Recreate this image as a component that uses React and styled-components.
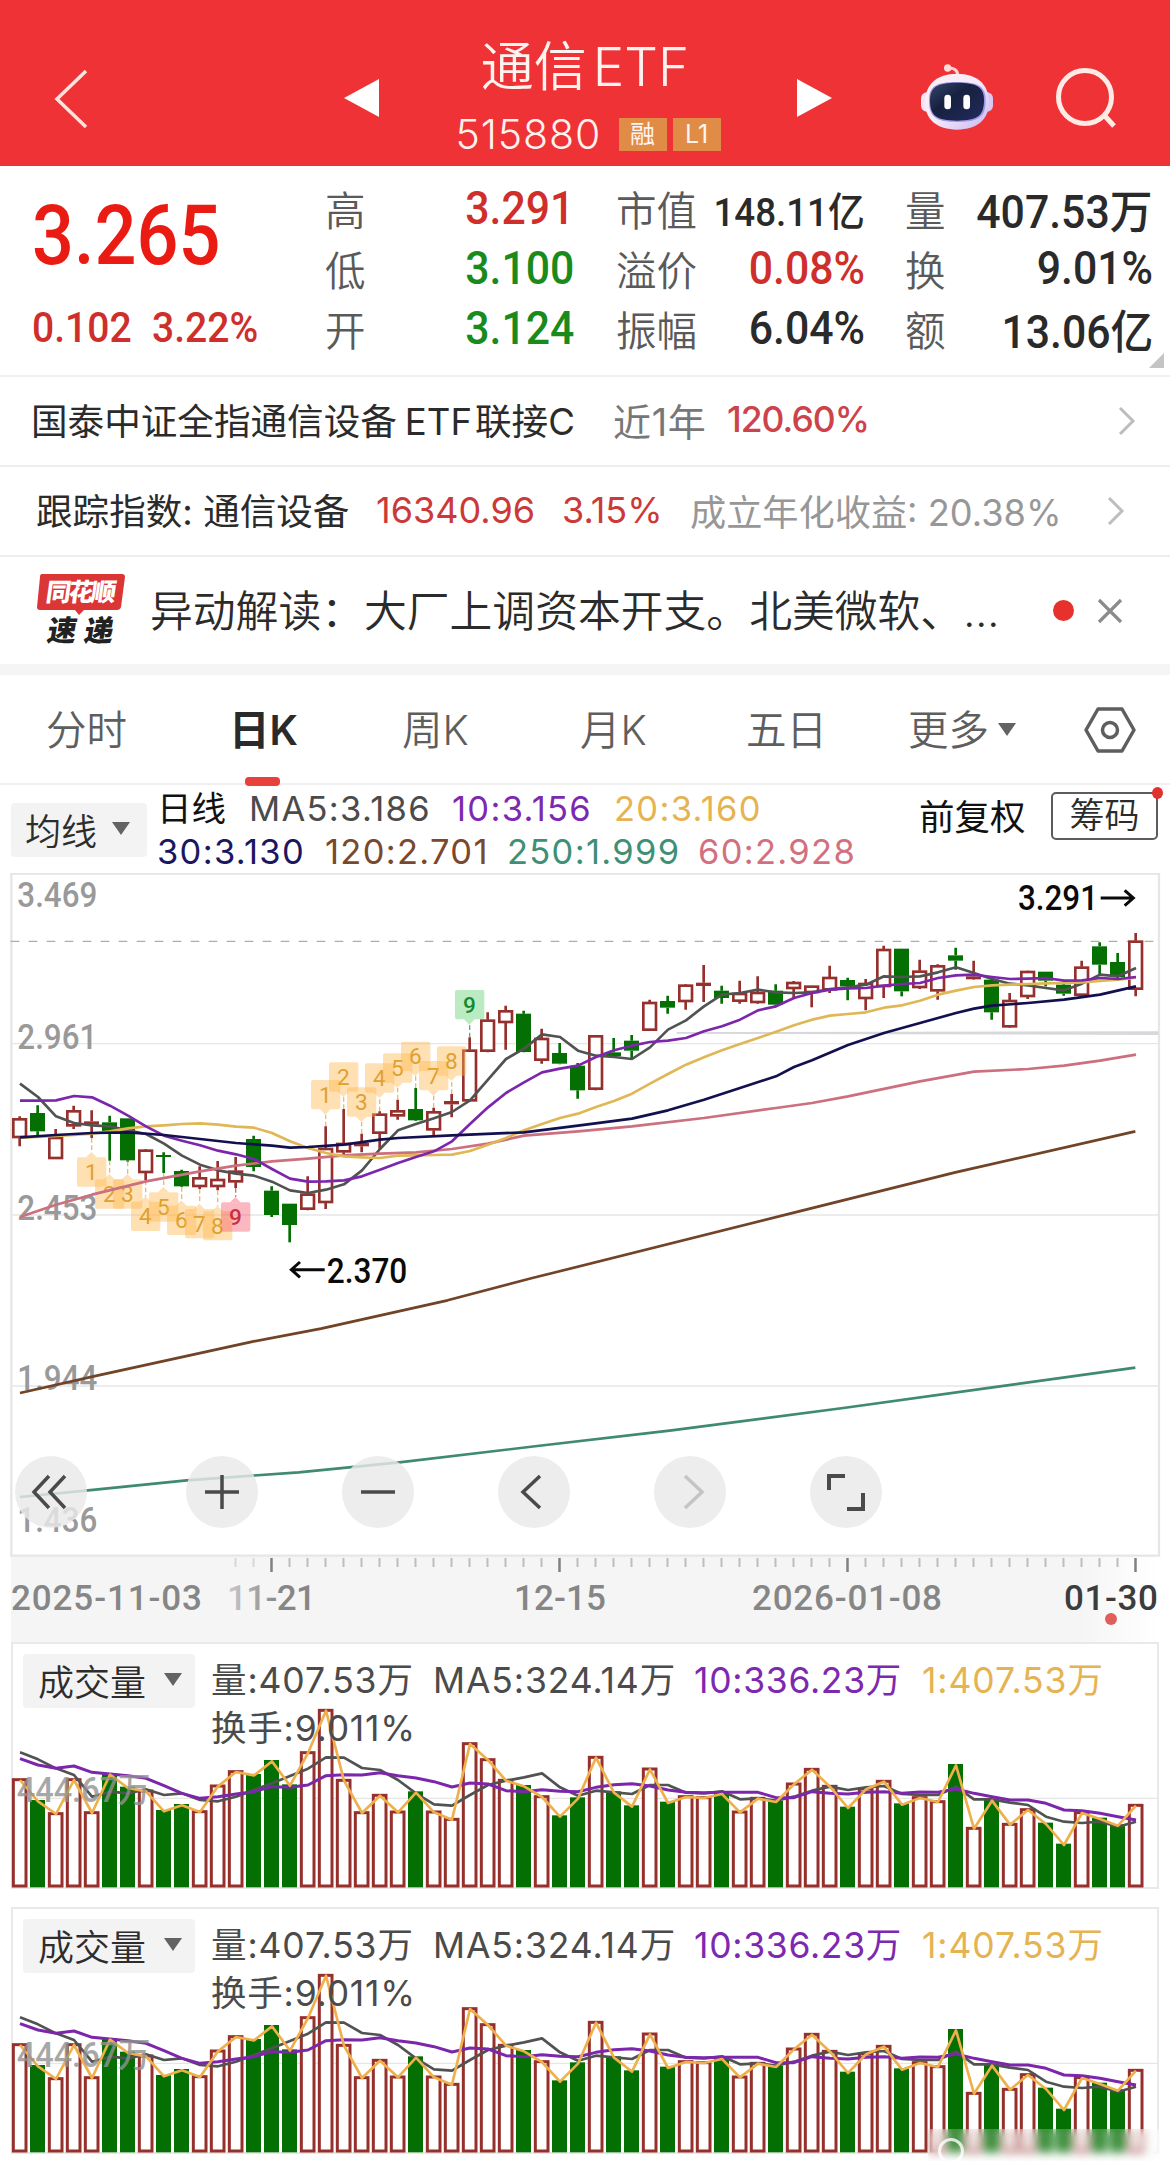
import React from 'react';
import styled, { createGlobalStyle } from 'styled-components';

const GlobalStyle = createGlobalStyle`
  * {
    box-sizing: border-box;
  }

  body {
    margin: 0;
    background: #fff;
    font-family: Inter, "Noto Sans CJK SC", sans-serif;
    color: #2b2b2b;
  }
`;

const DIN = 'Roboto, "Noto Sans CJK SC", sans-serif';

const Page = styled.div`
  width: 1170px;
  height: 2173px;
  overflow: hidden;
  background: #fff;
`;

/* ---------- header ---------- */

const Header = styled.header`
  display: grid;
  grid-template-columns: 344px 35px 418px 35px 88px 76px 1fr;
  height: 166px;
  background: #ee3236;
  color: #fff3f0;

  svg {
    display: block;
  }
`;

const HeaderCell = styled.div`
  padding-top: ${(p) => p.$top}px;
  padding-left: ${(p) => p.$left || 0}px;
`;

const TitleBlock = styled.div`
  padding-top: 37px;
  display: flex;
  flex-direction: column;
  align-items: center;
`;

const Title = styled.h1`
  margin: 0;
  font-size: 53px;
  line-height: 60px;
  font-weight: 350;
  white-space: nowrap;
  padding-right: 6px;

  span {
    margin-left: 6px;
  }
`;

const SubTitle = styled.div`
  display: flex;
  align-items: center;
  gap: 6px;
  height: 34px;
  margin-top: 20px;
`;

const Code = styled.span`
  width: 157px;
  font-size: 41px;
  line-height: 34px;
  font-weight: 350;
  letter-spacing: 0.9px;
`;

const Tag = styled.span`
  width: 48px;
  height: 33px;
  background: #e08c46;
  font-size: 25px;
  line-height: 33px;
  text-align: center;
`;

/* ---------- quote ---------- */

const Quote = styled.section`
  display: grid;
  grid-template-columns: 325px 249px 42px 249px 40px 248px;
  height: 211px;
  border-bottom: 2px solid #efefef;
  position: relative;
`;

const PriceBox = styled.div`
  padding: 30px 0 0 32px;
  color: #ea1b12;
  font-family: ${DIN};
`;

const Price = styled.div`
  font-size: 84px;
  line-height: 80px;
  font-weight: 500;
  transform: scaleX(0.88);
  transform-origin: left;
`;

const Change = styled.div`
  display: flex;
  margin-top: 30px;
  font-size: 42px;
  line-height: 44px;
  font-weight: 500;
  color: #cf2f2b;
  transform: scaleX(0.93);
  transform-origin: left;

  span {
    width: 129px;
  }
`;

const StatColumn = styled.div`
  padding-top: 12px;
`;

const Stat = styled.div`
  display: flex;
  justify-content: space-between;
  align-items: center;
  height: 60px;
  font-size: 40.5px;
  font-weight: 350;
  color: #5a5a5a;
  white-space: nowrap;
`;

const StatValue = styled.span`
  font-family: ${DIN};
  font-size: ${(p) => p.$size || 46}px;
  font-weight: 500;
  color: ${(p) => p.$color || '#2a2a2a'};
  transform: scaleX(0.93);
  transform-origin: right;
`;

const Corner = styled.i`
  position: absolute;
  right: 6px;
  bottom: 7px;
  border-left: 15px solid transparent;
  border-bottom: 15px solid #c4c4c4;
`;

/* ---------- link rows ---------- */

const Row = styled.div`
  display: flex;
  align-items: center;
  height: 90px;
  padding-left: ${(p) => p.$pad}px;
  border-bottom: 2px solid #eeeeee;
  white-space: nowrap;
`;

const RowText = styled.span`
  flex: none;
  width: ${(p) => p.$w}px;
  padding-bottom: 3px;
  font-size: ${(p) => p.$size || 36}px;
  font-weight: ${(p) => p.$weight || 400};
  letter-spacing: ${(p) => p.$ls || 0}px;
  color: ${(p) => p.$color || '#2b2b2b'};
`;

const Latin = styled.span`
  margin: 0 3px 0 8px;
`;

const News = styled(Row)`
  height: 107px;
  border-bottom: 0;
`;

const NewsLogo = styled.div`
  width: 88px;
  height: 76px;
  margin-right: 25px;
`;

const NewsText = styled.div`
  width: 903px;
  padding-bottom: 5px;
  font-size: 42.8px;
  font-weight: 350;
`;

const Dot = styled.i`
  width: 21px;
  height: 21px;
  border-radius: 50%;
  background: #e8302c;
  margin-right: 23px;
`;

const Band = styled.div`
  height: 11px;
  background: #f5f5f5;
`;

/* ---------- tabs ---------- */

const Tabs = styled.nav`
  display: grid;
  grid-template-columns: 185px 171px 178px 165px 173px 196px 1fr;
  height: 110px;
  border-bottom: 2px solid #efefef;
`;

const Tab = styled.div`
  position: relative;
  padding-left: ${(p) => p.$pad}px;
  font-size: 40.5px;
  line-height: 112px;
  font-weight: ${(p) => (p.$active ? 600 : 350)};
  color: ${(p) => (p.$active ? '#2a2a2a' : '#5e5e5e')};
  white-space: nowrap;

  &::after {
    content: '';
    display: ${(p) => (p.$active ? 'block' : 'none')};
    position: absolute;
    left: 60px;
    bottom: 1px;
    width: 35px;
    height: 9px;
    border-radius: 4px;
    background: #e8403a;
  }
`;

const Caret = styled.i`
  display: inline-block;
  border-left: 9.5px solid transparent;
  border-right: 9.5px solid transparent;
  border-top: 13px solid #636363;
  margin-left: ${(p) => p.$gap}px;
  vertical-align: ${(p) => p.$lift || 0}px;
`;

const SettingCell = styled.div`
  padding: 32px 0 0 16px;
`;

/* ---------- indicator legend ---------- */

const Indicator = styled.section`
  display: flex;
  height: 88px;
  padding-left: 11px;
`;

const Pill = styled.div`
  display: flex;
  align-items: center;
  width: ${(p) => p.$w}px;
  height: 54px;
  padding: 0 0 3px ${(p) => p.$pad || 15}px;
  border-radius: 4px;
  background: #f3f3f3;
  font-size: 36px;
  font-weight: 350;
  color: #2d2d2d;
  white-space: nowrap;
`;

const IndicatorPill = styled(Pill)`
  margin: 18px 10px 0 0;
`;

const Lines = styled.div`
  width: 762px;
  padding-top: 2px;
`;

const LegendLine = styled.div`
  display: flex;
  height: 43px;
  line-height: 43px;
  font-size: 34.5px;
  white-space: nowrap;
`;

const Legend = styled.span`
  flex: none;
  width: ${(p) => p.$w}px;
  color: ${(p) => p.$color || '#4b4b4b'};
  letter-spacing: ${(p) => p.$ls ?? 1.3}px;
`;

const Adjust = styled.div`
  width: 132px;
  line-height: 65px;
  font-size: 35.5px;
  color: #111;
`;

const Chips = styled.div`
  position: relative;
  width: 107px;
  height: 48px;
  margin-top: 7px;
  border: 2px solid #5c5c5c;
  border-radius: 5px;
  font-size: 35px;
  line-height: 43px;
  text-align: center;
  font-weight: 350;

  &::after {
    content: '';
    position: absolute;
    right: -7px;
    top: -7px;
    width: 11px;
    height: 12px;
    border-radius: 50%;
    background: #e0322e;
  }
`;

/* ---------- charts ---------- */

const ChartPanel = styled.section`
  position: relative;
  height: 684px;

  svg {
    display: block;
  }
`;

const Toolbar = styled.div`
  position: absolute;
  left: 15px;
  top: 583px;
  display: flex;
  gap: 84px;
`;

const ToolButton = styled.button`
  width: 72px;
  height: 72px;
  padding: 0;
  border: 0;
  border-radius: 50%;
  background: rgba(233, 233, 233, 0.82);
  color: ${(p) => (p.$muted ? '#c4c4c4' : '#4a4a4a')};

  &:first-child {
    margin-right: 15px;
  }
`;

const Axis = styled.div`
  height: 85px;
  margin: 0 11px;
  background: linear-gradient(90deg, #f5f5f5 0 93%, #fff 100%);

  svg {
    display: block;
    margin-left: -11px;
  }
`;

const VolumePanel = styled.section`
  display: grid;
  height: 247px;
  margin: 0 11px ${(p) => p.$gap}px;
  border: 2px solid #e9e9e9;

  > * {
    grid-area: 1 / 1;
  }
`;

const VolumeHead = styled.div`
  display: flex;
  padding: 10px 0 0 10px;
`;

const VolumeLegend = styled.div`
  margin: 3px 0 0 16px;
  font-size: 35.5px;
  line-height: 48px;
  white-space: nowrap;

  > div {
    display: flex;
  }
`;

const VolumeSvg = styled.svg`
  display: block;
  width: 1170px;
  height: 247px;
  margin: -2px 0 0 -13px;
`;

const Watermark = styled.div`
  position: absolute;
  left: 928px;
  top: 2129px;
  width: 232px;
  height: 32px;
  backdrop-filter: blur(5px);
  background: rgba(255, 255, 255, 0.2);

  &::before {
    content: '';
    position: absolute;
    left: 10px;
    top: 9px;
    width: 20px;
    height: 20px;
    border: 3px solid rgba(255, 255, 255, 0.8);
    border-radius: 50%;
  }
`;

const GREEN = '#047004';
const RED = '#96302d';

// one unit is a third of a pixel; each bar is 54 units apart
const barX = (i) => 58 + 54 * i;

// [up, body top, body bottom, high, low]
const candles = [
  [1, 776, 835, 770, 860], [0, 760, 815, 737, 828], [1, 832, 898, 808, 898], [1, 752, 800, 738, 808],
  [1, 785, 795, 752, 835], [0, 788, 815, 768, 903], [0, 776, 902, 776, 906], [1, 870, 940, 868, 962],
  [0, 886, 892, 878, 940], [0, 934, 980, 930, 982], [1, 953, 982, 920, 988], [1, 958, 982, 904, 992],
  [1, 933, 968, 892, 985], [0, 838, 922, 828, 935], [0, 993, 1066, 980, 1072], [0, 1032, 1096, 1032, 1148],
  [1, 1002, 1050, 950, 1052], [1, 865, 1030, 800, 1048], [1, 850, 878, 748, 885], [1, 850, 860, 822, 878],
  [1, 762, 822, 755, 868], [1, 752, 770, 720, 780], [0, 748, 782, 685, 784], [1, 755, 812, 744, 828],
  [1, 724, 734, 703, 773], [1, 570, 725, 533, 725], [1, 480, 576, 458, 578], [1, 452, 490, 438, 570],
  [0, 462, 577, 453, 578], [1, 535, 603, 507, 612], [0, 580, 612, 550, 614], [0, 618, 692, 610, 717],
  [1, 527, 690, 527, 692], [0, 578, 590, 535, 592], [0, 543, 573, 526, 600], [1, 427, 513, 420, 514],
  [0, 424, 444, 408, 462], [1, 375, 427, 373, 450], [1, 369, 379, 316, 427], [0, 393, 415, 378, 432],
  [1, 400, 426, 363, 432], [1, 397, 430, 350, 432], [0, 393, 435, 374, 440], [1, 367, 388, 364, 415],
  [1, 378, 400, 378, 443], [1, 352, 392, 318, 400], [0, 361, 380, 354, 422], [1, 370, 418, 358, 452],
  [1, 268, 382, 258, 415], [0, 267, 395, 267, 410], [1, 333, 385, 300, 388], [1, 317, 395, 314, 420],
  [0, 287, 303, 264, 330], [1, 350, 359, 303, 360], [0, 360, 458, 358, 480], [1, 421, 503, 400, 504],
  [1, 334, 412, 333, 418], [0, 336, 363, 336, 380], [0, 375, 402, 370, 408], [1, 321, 408, 303, 412],
  [0, 260, 315, 248, 345], [0, 307, 352, 280, 355], [1, 243, 390, 220, 410],
];

const ma5 = [
  672, 712, 770, 790, 797, 800, 812, 823, 852, 888, 915, 932, 942, 948, 966, 992, 1000, 990, 974, 932, 868,
  812, 793, 776, 757, 722, 660, 598, 567, 524, 532, 573, 588, 592, 598, 563, 510, 482, 440, 405, 400, 390,
  398, 400, 398, 388, 383, 375, 350, 352, 350, 338, 323, 340, 358, 372, 377, 385, 392, 372, 345, 350, 325,
];

const ma10 = [
  723, 723, 722, 709, 713, 738, 768, 800, 828, 843, 857, 873, 884, 898, 928, 957, 966, 965, 962, 950, 930,
  910, 892, 875, 845, 793, 743, 700, 668, 638, 627, 618, 592, 572, 558, 547, 543, 535, 515, 500, 480, 452,
  440, 415, 400, 390, 386, 385, 378, 373, 370, 355, 347, 345, 352, 358, 357, 355, 363, 362, 355, 358, 352,
];

const ma20 = [
  834, 832, 829, 826, 822, 815, 806, 800, 797, 793, 791, 795, 801, 804, 820, 845, 865, 880, 890, 893, 895,
  888, 887, 886, 885, 874, 855, 835, 812, 793, 775, 762, 742, 724, 702, 672, 643, 615, 593, 572, 553, 535,
  516, 497, 480, 468, 463, 458, 444, 437, 423, 405, 393, 382, 377, 375, 373, 371, 370, 368, 364, 360, 354,
];

// sparse averages: [bar index, y]
const ma30 = [
  [0, 833], [2, 826], [4, 820], [6, 818], [8, 826], [10, 838], [12, 850], [14, 858], [15, 864], [16, 862],
  [18, 855], [20, 840], [21, 835], [24, 827], [28, 818], [31, 798], [34, 777], [36, 752], [38, 720],
  [40, 685], [42, 650], [43, 622], [44, 602], [46, 556], [48, 520], [50, 490], [52, 460], [53, 447],
  [54, 438], [56, 430], [58, 420], [60, 405], [62, 380],
];

const ma60 = [
  [0, 1072], [2, 1035], [4, 1005], [7, 965], [10, 935], [12, 918], [14, 905], [16, 897], [18, 887], [20, 882],
  [22, 878], [24, 868], [26, 852], [28, 828], [31, 815], [34, 800], [38, 775], [42, 745], [44, 730],
  [46, 710], [50, 665], [53, 636], [56, 628], [58, 618], [60, 603], [62, 585],
];

const ma120 = '60,1600 291,1548 761,1445 963,1407 1343,1322 1594,1256 2370,1062 2866,938 3406,815';
const ma250 = '60,1912 264,1892 560,1862 896,1838 1198,1808 1612,1759 2015,1712 2530,1645 2978,1583 3406,1524';

// td sequence marks: [bar index, number, y]
const marks = [
  [4, 1, 937], [5, 2, 1003], [6, 3, 1003], [7, 4, 1070], [8, 5, 1042], [9, 6, 1082], [10, 7, 1092],
  [11, 8, 1098], [12, 9, 1072], [17, 1, 705], [18, 2, 652], [19, 3, 727], [20, 4, 655], [21, 5, 625],
  [22, 6, 590], [23, 7, 648], [24, 8, 604], [25, 9, 435],
];

const grid = [
  { y: 40, label: '3.469', base: 143 },
  { y: 552, label: '2.961', base: 567 },
  { y: 1066, label: '2.453', base: 1080 },
  { y: 1579, label: '1.944', base: 1592 },
  { y: 2088, label: '1.436', base: 2017 },
];

const volumes = [
  446, 510, 548, 446, 545, 430, 470, 480, 540, 522, 542, 465, 422, 432, 390, 463, 365, 238, 448, 545, 493,
  543, 484, 543, 565, 338, 386, 448, 465, 497, 556, 502, 379, 484, 526, 414, 515, 497, 500, 488, 543, 502,
  512, 459, 415, 466, 530, 474, 451, 520, 500, 512, 402, 592, 508, 580, 536, 578, 641, 545, 563, 583, 523,
];

const volMa5 = [
  367, 388, 415, 435, 500, 485, 490, 478, 495, 490, 510, 514, 500, 480, 460, 438, 416, 382, 383, 414, 420,
  450, 490, 523, 527, 495, 465, 452, 442, 430, 472, 497, 482, 487, 492, 465, 465, 488, 490, 484, 508, 505,
  512, 500, 482, 470, 480, 472, 468, 492, 495, 495, 470, 508, 508, 518, 525, 560, 575, 579, 575, 590, 575,
];

const volMa10 = [
  386, 405, 415, 408, 427, 432, 437, 445, 467, 490, 505, 500, 492, 485, 470, 472, 465, 437, 434, 435, 428,
  437, 444, 455, 471, 459, 462, 482, 485, 479, 484, 485, 472, 464, 461, 468, 480, 487, 488, 487, 487, 487,
  503, 503, 485, 490, 492, 487, 485, 490, 486, 487, 477, 490, 500, 510, 510, 520, 540, 542, 550, 560, 570,
];

const toPoints = (values) => values.map((y, i) => `${barX(i) + 2},${y}`).join(' ');
const toSparse = (values) => values.map(([i, y]) => `${barX(i) + 2},${y}`).join(' ');

const Line = ({ points, color, width = 8 }) => (
  <polyline points={points} fill="none" stroke={color} strokeWidth={width} strokeLinejoin="round" />
);

const markColor = (i, n) => {
  if (n < 9) return { bg: '#ffb44a', fg: '#e0a030' };
  return i === 12 ? { bg: '#f8566a', fg: '#c8323c' } : { bg: '#5ccf70', fg: '#178a2c' };
};

const Candles = () =>
  candles.map(([up, top, bottom, high, low], i) => {
    const x = barX(i);
    const color = up ? RED : GREEN;
    const solid = !up || bottom - top < 14;
    return (
      <g key={i} stroke={color} strokeWidth="8">
        <path d={`M${x + 1} ${high}V${top}M${x + 1} ${bottom}V${low}`} />
        {solid ? (
          <rect x={x - 22} y={top} width="45" height={bottom - top} fill={color} stroke="none" />
        ) : (
          <rect x={x - 18} y={top + 3} width="38" height={Math.max(bottom - top - 6, 4)} fill="#fff" />
        )}
      </g>
    );
  });

const Marks = () =>
  marks.map(([i, n, y]) => {
    const { bg, fg } = markColor(i, n);
    const above = i > 12;
    const x = barX(i);
    const edge = above ? candles[i][3] : candles[i][4];
    const tip = above ? y + 60 : y - 60;
    const side = above ? y + 44 : y - 44;
    return (
      <g key={i}>
        <path d={`M${x + 1} ${edge}V${tip}`} stroke={fg} strokeWidth="4" strokeDasharray="14 8" opacity="0.7" />
        <rect x={x - 43} y={y - 44} width="88" height="88" rx="6" fill={bg} opacity="0.42" />
        <path d={`M${x - 16} ${side}L${x} ${tip}L${x + 16} ${side}Z`} fill={bg} opacity="0.42" />
        <text
          x={x}
          y={y + 24}
          fontFamily="Roboto"
          fontSize="68"
          fontWeight={n === 9 ? 500 : 400}
          fill={fg}
          textAnchor="middle"
        >
          {n}
        </text>
      </g>
    );
  });

const PriceChart = () => (
  <svg width="1170" height="684" viewBox="0 40 3510 2052">
    <rect x="34" y="42" width="3443" height="2046" fill="none" stroke="#e6e6e6" strokeWidth="7" />
    {grid.slice(1, 4).map((g) => (
      <path key={g.y} d={`M34 ${g.y}H3475`} stroke="#e6e6e6" strokeWidth="4" />
    ))}
    <path d="M2030 517L3475 515V526L2030 522Z" fill="#d8d8dc" />
    <path d="M32 245H3475" stroke="#b3ae8c" strokeWidth="4" strokeDasharray="26 28" />
    {grid.map((g) => (
      <text
        key={g.label}
        x="52"
        y={g.base}
        fontFamily="Roboto"
        fontSize="105"
        fontWeight="500"
        fill="#999"
        textLength="240"
        lengthAdjust="spacingAndGlyphs"
      >
        {g.label}
      </text>
    ))}
    <Candles />
    <Marks />
    <Line points={toPoints(ma5)} color="#505352" />
    <Line points={toSparse(ma60)} color="#cc6f7e" />
    <Line points={toPoints(ma20)} color="#e0b755" />
    <Line points={toPoints(ma10)} color="#7c26ac" />
    <Line points={toSparse(ma30)} color="#12104f" />
    <Line points={ma120} color="#714327" />
    <Line points={ma250} color="#3f8a70" />
    <g fill="#0a0a0a" fontFamily="Roboto" fontWeight="500" fontSize="106">
      <text x="3054" y="152" textLength="240" lengthAdjust="spacingAndGlyphs">3.291</text>
      <text x="980" y="1270" textLength="242" lengthAdjust="spacingAndGlyphs">2.370</text>
    </g>
    <g fill="none" stroke="#0a0a0a" strokeWidth="9">
      <path d="M3302 115H3398M3374 92L3400 115L3374 138" />
      <path d="M974 1230H876M900 1207L874 1230L900 1253" />
    </g>
  </svg>
);

const dates = [
  { x: 11, w: 191, text: '2025-11-03', color: '#868686' },
  { x: 227, w: 89, text: '11-21', color: 'url(#fade)' },
  { x: 514, w: 92, text: '12-15', color: '#868686' },
  { x: 752, w: 190, text: '2026-01-08', color: '#868686' },
  { x: 1064, w: 94, text: '01-30', color: '#3c3c3c' },
];

const TimeAxis = () => (
  <Axis>
    <svg width="1170" height="85">
      <defs>
        <linearGradient id="fade">
          <stop offset="0" stopColor="#cacaca" />
          <stop offset="0.6" stopColor="#868686" />
        </linearGradient>
      </defs>
      {Array.from({ length: 51 }, (_, k) => k + 12).map((i) => {
        const major = (i - 14) % 16 === 0;
        return (
          <path
            key={i}
            d={`M${20 + 18 * i - 0.5} 1v${major ? 14 : 9}`}
            stroke={major ? '#808080' : '#bdbdbd'}
            strokeWidth={major ? 2.5 : 2}
            opacity={i < 14 ? 0.5 : 1}
          />
        );
      })}
      {dates.map((d) => (
        <text
          key={d.text}
          x={d.x}
          y="53"
          fontFamily="Roboto"
          fontSize="35"
          fontWeight="500"
          fill={d.color}
          textLength={d.w}
        >
          {d.text}
        </text>
      ))}
      <circle cx="1111" cy="62" r="6" fill="#e05f5c" />
    </svg>
  </Axis>
);

const VolumeBars = () => (
  <VolumeSvg viewBox="0 36 3510 741">
    <path d="M34 505H3475" stroke="#e6e6e6" strokeWidth="4" />
    {volumes.map((top, i) => {
      const x = barX(i);
      return candles[i][0] ? (
        <rect key={i} x={x - 18} y={top + 3} width="38" height={765 - top} fill="#fff" stroke={RED} strokeWidth="9" />
      ) : (
        <rect key={i} x={x - 22} y={top} width="45" height={772 - top} fill={GREEN} />
      );
    })}
    <Line points={toPoints(volMa5)} color="#505352" />
    <Line points={toPoints(volMa10)} color="#7c26ac" width={9} />
    <Line points={toPoints(volumes.map((v) => v + 4))} color="#efb04c" />
    <text
      x="50"
      y="516"
      fontFamily={DIN}
      fontSize="104"
      fontWeight="500"
      fill="#929292"
      opacity="0.8"
      textLength="402"
      lengthAdjust="spacingAndGlyphs"
    >
      444.67万
    </text>
  </VolumeSvg>
);

const Volume = ({ gap }) => (
  <VolumePanel $gap={gap}>
    <VolumeBars />
    <VolumeHead>
      <Pill $w={172}>
        成交量
        <Caret $gap={18} />
      </Pill>
      <VolumeLegend>
        <div>
          <Legend $w={222} $ls={0.9}>量:407.53万</Legend>
          <Legend $w={261} $ls={0.9}>MA5:324.14万</Legend>
          <Legend $w={228} $ls={0.7} $color="#7d28b0">10:336.23万</Legend>
          <Legend $w={190} $ls={0.9} $color="#e5b352">1:407.53万</Legend>
        </div>
        <div>
          <Legend $w={220} $ls={0.8}>换手:9.011%</Legend>
        </div>
      </VolumeLegend>
    </VolumeHead>
  </VolumePanel>
);

const Chevron = ({ gray = '#bdbdbd' }) => (
  <svg width="18" height="30" fill="none" stroke={gray} strokeWidth="3">
    <path d="M2 2L15 15L2 28" />
  </svg>
);

const Robot = () => (
  <svg width="72" height="68" viewBox="0 0 216 204">
    <defs>
      <linearGradient id="shell" x1="0" y1="0" x2="1" y2="1">
        <stop offset="0" stopColor="#fff1f2" />
        <stop offset="0.5" stopColor="#f6e9fa" />
        <stop offset="1" stopColor="#c7b6f2" />
      </linearGradient>
      <linearGradient id="face" x1="0" y1="0" x2="1" y2="1">
        <stop offset="0" stopColor="#37466c" />
        <stop offset="0.4" stopColor="#17213f" />
        <stop offset="1" stopColor="#222a5c" />
      </linearGradient>
    </defs>
    <path d="M80 17C98 12 112 22 110 42" fill="none" stroke="#fbd3d3" strokeWidth="9" />
    <circle cx="80" cy="15" r="11" fill="#ffdcdc" />
    <rect x="0" y="88" width="40" height="58" rx="18" fill="#f6e6f4" />
    <rect x="174" y="88" width="42" height="58" rx="18" fill="#d9c8f4" />
    <path d="M108 32C170 32 204 66 204 118C204 170 168 200 108 200C48 200 12 170 12 118C12 66 46 32 108 32Z" fill="url(#shell)" />
    <path d="M108 57C172 57 194 70 194 112C194 162 174 177 108 177C44 177 24 162 24 112C24 70 44 57 108 57Z" fill="#9b98e4" />
    <path d="M108 59C168 59 189 72 189 112C189 158 170 173 108 173C46 173 27 158 27 112C27 72 48 59 108 59Z" fill="url(#face)" />
    <rect x="70" y="95" width="20" height="44" rx="10" fill="#fff" />
    <rect x="127" y="95" width="20" height="44" rx="10" fill="#fff" />
  </svg>
);

const App = () => (
  <>
    <GlobalStyle />
    <Page>
      <Header>
        <HeaderCell $top={69} $left={53}>
          <svg width="36" height="60" fill="none" stroke="#ffe3dd" strokeWidth="3.5">
            <path d="M33 2L4 30L33 58" />
          </svg>
        </HeaderCell>
        <HeaderCell $top={79}>
          <svg width="35" height="38">
            <path d="M0 19L35 0V38Z" fill="#fff" />
          </svg>
        </HeaderCell>
        <TitleBlock>
          <Title>通信<span>ETF</span></Title>
          <SubTitle>
            <Code>515880</Code>
            <Tag>融</Tag>
            <Tag>L1</Tag>
          </SubTitle>
        </TitleBlock>
        <HeaderCell $top={79}>
          <svg width="35" height="38">
            <path d="M35 19L0 0V38Z" fill="#fff" />
          </svg>
        </HeaderCell>
        <div />
        <HeaderCell $top={63} $left={1}>
          <Robot />
        </HeaderCell>
        <HeaderCell $top={66} $left={58}>
          <svg width="64" height="64" fill="none" stroke="#ffeae5" strokeWidth="5">
            <circle cx="31" cy="31" r="26.5" />
            <path d="M50 49L60 60" />
          </svg>
        </HeaderCell>
      </Header>

      <Quote>
        <PriceBox>
          <Price>3.265</Price>
          <Change>
            <span>0.102</span>
            3.22%
          </Change>
        </PriceBox>
        <StatColumn>
          <Stat>高<StatValue $color="#cf2f2b">3.291</StatValue></Stat>
          <Stat>低<StatValue $color="#198a1c">3.100</StatValue></Stat>
          <Stat>开<StatValue $color="#198a1c">3.124</StatValue></Stat>
        </StatColumn>
        <div />
        <StatColumn>
          <Stat>市值<StatValue $size={39.5}>148.11亿</StatValue></Stat>
          <Stat>溢价<StatValue $color="#cf2f2b">0.08%</StatValue></Stat>
          <Stat>振幅<StatValue>6.04%</StatValue></Stat>
        </StatColumn>
        <div />
        <StatColumn>
          <Stat>量<StatValue>407.53万</StatValue></Stat>
          <Stat>换<StatValue>9.01%</StatValue></Stat>
          <Stat>额<StatValue>13.06亿</StatValue></Stat>
        </StatColumn>
        <Corner />
      </Quote>

      <Row $pad={31}>
        <RowText $w={582} $size={36.6}>
          国泰中证全指通信设备<Latin>ETF</Latin>联接C
        </RowText>
        <RowText $w={114} $color="#777" $size={38} $ls={0.7}>近1年</RowText>
        <RowText $w={391} $color="#cc434a" $weight={500} $size={35.5} $ls={-1}>120.60%</RowText>
        <Chevron />
      </Row>
      <Row $pad={36}>
        <RowText $w={340} $size={36.6}>跟踪指数: 通信设备</RowText>
        <RowText $w={186} $color="#cb3a38">16340.96</RowText>
        <RowText $w={128} $color="#cb3a38">3.15%</RowText>
        <RowText $w={417} $color="#979797" $size={36.2}>成立年化收益: 20.38%</RowText>
        <Chevron />
      </Row>
      <News $pad={37}>
        <NewsLogo>
          <svg width="88" height="76">
            <path d="M5 1H85Q88 1 88 4L84 34Q83 37 80 37H47L42 42L38 37H3Q0 37 0 34L3 4Q3 1 5 1Z" fill="#dc3535" />
            <g fontFamily="Noto Sans CJK SC" fontWeight="900" fontSize="25">
              <text transform="translate(8 28) skewX(-8)" fill="#fff" textLength="70">同花顺</text>
              <text transform="translate(9 68) skewX(-10)" fontSize="29" fill="#222" textLength="66">速递</text>
            </g>
          </svg>
        </NewsLogo>
        <NewsText>异动解读：大厂上调资本开支。北美微软、...</NewsText>
        <Dot />
        <svg width="26" height="26" fill="none" stroke="#8b8b8b" strokeWidth="3.2">
          <path d="M2 2L24 24M24 2L2 24" />
        </svg>
      </News>
      <Band />

      <Tabs>
        <Tab $pad={46}>分时</Tab>
        <Tab $pad={44} $active>日K</Tab>
        <Tab $pad={46}>周K</Tab>
        <Tab $pad={46}>月K</Tab>
        <Tab $pad={47}>五日</Tab>
        <Tab $pad={36}>
          更多
          <Caret $gap={9} $lift={9} />
        </Tab>
        <SettingCell>
          <svg width="52" height="46" fill="none" stroke="#5e5e5e" strokeWidth="3.5">
            <path d="M14 2H38L50 23L38 44H14L2 23Z" strokeLinejoin="round" />
            <circle cx="26" cy="23" r="7.5" />
          </svg>
        </SettingCell>
      </Tabs>

      <Indicator>
        <IndicatorPill $w={136} $pad={14}>
          均线
          <Caret $gap={15} />
        </IndicatorPill>
        <Lines>
          <LegendLine>
            <Legend $w={92} $ls={0} $color="#111">日线</Legend>
            <Legend $w={203}>MA5:3.186</Legend>
            <Legend $w={162} $color="#7d28b0">10:3.156</Legend>
            <Legend $w={150} $color="#e5b352">20:3.160</Legend>
          </LegendLine>
          <LegendLine>
            <Legend $w={168} $color="#1a1760">30:3.130</Legend>
            <Legend $w={182} $color="#7a482c">120:2.701</Legend>
            <Legend $w={191} $color="#3f8f76">250:1.999</Legend>
            <Legend $w={160} $color="#d27080">60:2.928</Legend>
          </LegendLine>
        </Lines>
        <Adjust>前复权</Adjust>
        <Chips>筹码</Chips>
      </Indicator>

      <ChartPanel>
        <PriceChart />
        <Toolbar>
          <ToolButton>
            <svg width="72" height="72" fill="none" stroke="currentColor" strokeWidth="3.5">
              <path d="M34 20L19 36L34 52M50 20L35 36L50 52" />
            </svg>
          </ToolButton>
          <ToolButton>
            <svg width="72" height="72" fill="none" stroke="currentColor" strokeWidth="3.5">
              <path d="M36 19V53M19 36H53" />
            </svg>
          </ToolButton>
          <ToolButton>
            <svg width="72" height="72" fill="none" stroke="currentColor" strokeWidth="3.5">
              <path d="M19 36H53" />
            </svg>
          </ToolButton>
          <ToolButton>
            <svg width="72" height="72" fill="none" stroke="currentColor" strokeWidth="3.5">
              <path d="M42 20L25 36L42 52" />
            </svg>
          </ToolButton>
          <ToolButton $muted>
            <svg width="72" height="72" fill="none" stroke="currentColor" strokeWidth="3.5">
              <path d="M31 20L48 36L31 52" />
            </svg>
          </ToolButton>
          <ToolButton>
            <svg width="72" height="72" fill="none" stroke="currentColor" strokeWidth="4">
              <path d="M19 34V20H35M53 37V53H37" />
            </svg>
          </ToolButton>
        </Toolbar>
      </ChartPanel>
      <TimeAxis />
      <Volume gap={18} />
      <Volume gap={0} />
      <Watermark />
    </Page>
  </>
);

export default App;
